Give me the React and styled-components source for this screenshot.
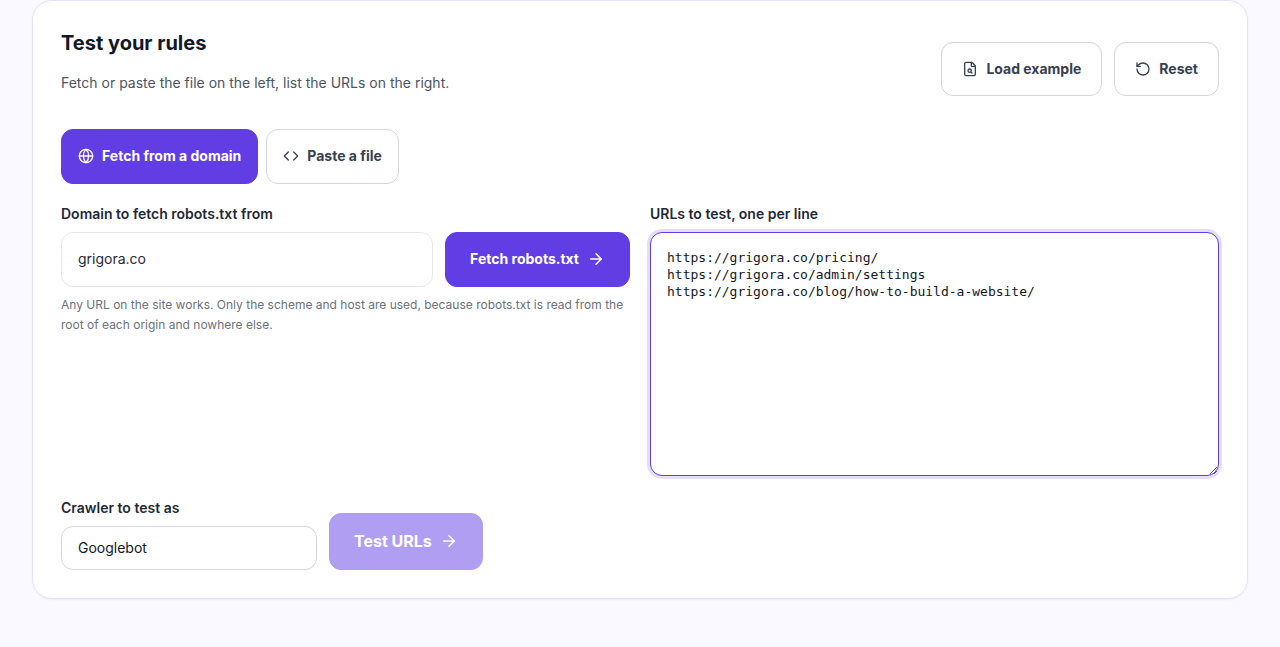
import React, { useState } from 'react'
import styled, { createGlobalStyle } from 'styled-components'
import { ArrowRight, Code, FileSearch, Globe, RotateCcw } from 'lucide-react'

const GlobalStyle = createGlobalStyle`
  :root {
    --primary: #613de4;
    --primary-light: #e4defa;
    --border: #d1d5db;
    --border-light: #e5e7eb;
    --text-dark: #111827;
    --text: #374151;
    --text-light: #6b7280;
    --radius: 12px;
  }
  * {
    box-sizing: border-box;
  }
  body {
    margin: 0;
    background: #faf9ff;
    color: var(--text-dark);
    font-family: Inter, "Liberation Sans", sans-serif;
    font-size: 14px;
    line-height: 20px;
  }
  button, input, select {
    font: inherit;
  }
`

const Page = styled.main`
  padding: 0 32px 48px;
`

const Card = styled.section`
  background: white;
  border: 1px solid #e6e1fb;
  border-radius: 20px;
  box-shadow: 0 1px 2px rgba(17, 24, 39, 0.05);
  padding: 28px;
`

const Header = styled.header`
  display: flex;
  align-items: center;
  justify-content: space-between;
  gap: 20px;
`

const Title = styled.h2`
  font-size: 20px;
  font-weight: 700;
  line-height: 28px;
  margin: 0;
`

const Subtitle = styled.p`
  color: #4b5563;
  line-height: 24px;
  margin: 14px 0;
`

const Actions = styled.div`
  display: flex;
  gap: 12px;
`

const Button = styled.button`
  display: inline-flex;
  align-items: center;
  justify-content: center;
  gap: 8px;
  min-height: 54px;
  padding: 0 20px;
  background: white;
  border: 1px solid var(--border);
  border-radius: var(--radius);
  color: var(--text);
  font-weight: 700;
  white-space: nowrap;
  cursor: pointer;
  svg {
    flex: none;
  }
`

const Tabs = styled.div`
  display: flex;
  gap: 8px;
  margin: 20px 0;
`

const Tab = styled(Button)`
  min-height: 55px;
  padding: 0 16px 1px;
  ${(props) => props.$active && `
    background: var(--primary);
    border-color: var(--primary);
    color: white;
  `}
`

const ButtonPrimary = styled(Button)`
  min-height: 55px;
  padding: 0 24px 1px;
  background: var(--primary);
  border-color: var(--primary);
  color: white;
`

const ButtonSubmit = styled(ButtonPrimary)`
  min-height: 57px;
  font-size: 16px;
  &:disabled {
    background: #b09ef2;
    border-color: #b09ef2;
    cursor: default;
  }
`

const Columns = styled.div`
  display: grid;
  grid-template-columns: repeat(auto-fit, minmax(380px, 1fr));
  gap: 20px;
`

const Field = styled.div`
  display: flex;
  flex-direction: column;
  gap: 8px;
`

const Label = styled.label`
  color: #1f2937;
  font-weight: 600;
`

const Row = styled.div`
  display: flex;
  gap: 12px;
`

const Input = styled.input`
  flex: 1;
  min-width: 0;
  padding: 0 16px 1px;
  background: white;
  border: 1px solid var(--border-light);
  border-radius: var(--radius);
  color: #1f2937;
`

const Hint = styled.p`
  color: var(--text-light);
  font-size: 12px;
  margin: 0;
`

const TextArea = styled.textarea`
  display: block;
  width: 100%;
  height: 244px;
  padding: 16px;
  background: white;
  border: 1px solid var(--primary);
  border-radius: var(--radius);
  box-shadow: 0 0 0 3px var(--primary-light);
  color: var(--text-dark);
  font-family: "DejaVu Sans Mono", monospace;
  font-size: 13px;
  line-height: 17px;
  outline: none;
  resize: vertical;
`

const Footer = styled.div`
  display: flex;
  align-items: flex-end;
  gap: 12px;
  margin-top: 22px;
`

const Select = styled.select`
  appearance: none;
  width: 256px;
  height: 44px;
  padding: 0 16px;
  background: white;
  border: 1px solid var(--border);
  border-radius: var(--radius);
  color: var(--text-dark);
`

const exampleUrls = [
  'https://grigora.co/pricing/',
  'https://grigora.co/admin/settings',
  'https://grigora.co/blog/how-to-build-a-website/',
].join('\n')

const App = () => {
  const [mode, setMode] = useState('domain')
  const [domain, setDomain] = useState('grigora.co')
  const [urls, setUrls] = useState(exampleUrls)

  const reset = () => {
    setMode('domain')
    setDomain('')
    setUrls('')
  }

  const loadExample = () => {
    setDomain('grigora.co')
    setUrls(exampleUrls)
  }

  return (
    <Page>
      <GlobalStyle />
      <Card>
        <Header>
          <div>
            <Title>Test your rules</Title>
            <Subtitle>Fetch or paste the file on the left, list the URLs on the right.</Subtitle>
          </div>
          <Actions>
            <Button type='button' onClick={loadExample}><FileSearch size={16} />Load example</Button>
            <Button type='button' onClick={reset}><RotateCcw size={16} />Reset</Button>
          </Actions>
        </Header>
        <Tabs>
          <Tab type='button' $active={mode === 'domain'} onClick={() => setMode('domain')}>
            <Globe size={16} />Fetch from a domain
          </Tab>
          <Tab type='button' $active={mode === 'paste'} onClick={() => setMode('paste')}>
            <Code size={16} />Paste a file
          </Tab>
        </Tabs>
        <Columns>
          <Field>
            <Label htmlFor='domain'>Domain to fetch robots.txt from</Label>
            <Row>
              <Input id='domain' type='text' value={domain} onChange={(e) => setDomain(e.target.value)} />
              <ButtonPrimary type='button'>Fetch robots.txt<ArrowRight size={18} /></ButtonPrimary>
            </Row>
            <Hint>
              Any URL on the site works. Only the scheme and host are used, because robots.txt is read from the
              root of each origin and nowhere else.
            </Hint>
          </Field>
          <Field>
            <Label htmlFor='urls'>URLs to test, one per line</Label>
            <TextArea id='urls' spellCheck={false} value={urls} onChange={(e) => setUrls(e.target.value)} />
          </Field>
        </Columns>
        <Footer>
          <Field>
            <Label htmlFor='crawler'>Crawler to test as</Label>
            <Select id='crawler' defaultValue='Googlebot'>
              <option>Googlebot</option>
            </Select>
          </Field>
          <ButtonSubmit type='button' disabled>Test URLs<ArrowRight size={18} /></ButtonSubmit>
        </Footer>
      </Card>
    </Page>
  )
}

export default App
